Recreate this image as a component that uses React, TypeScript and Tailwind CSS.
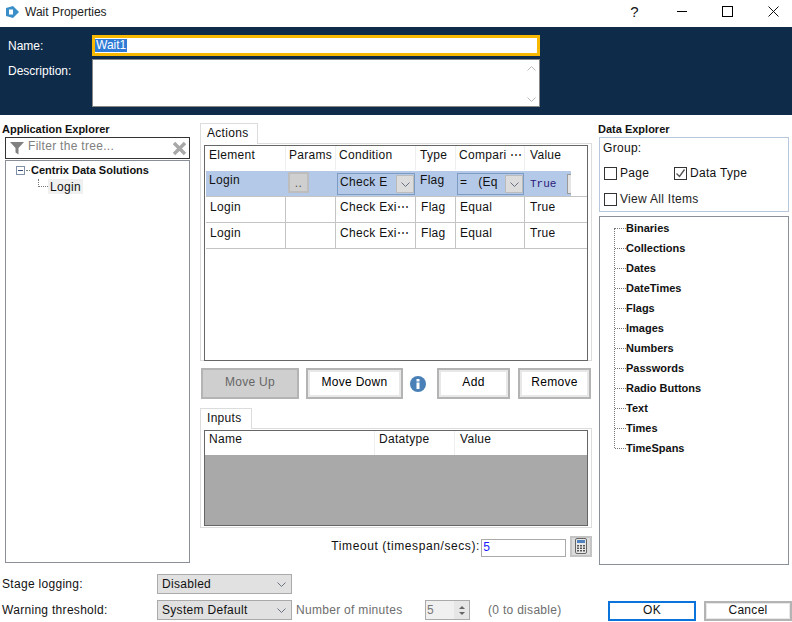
import { useState } from 'react';

const dataItems = [
  'Binaries',
  'Collections',
  'Dates',
  'DateTimes',
  'Flags',
  'Images',
  'Numbers',
  'Passwords',
  'Radio Buttons',
  'Text',
  'Times',
  'TimeSpans',
];

const columns = 'grid grid-cols-[80px_50px_80px_40px_69px_1fr]';

function Chevron({ className = 'text-gray-500' }: { className?: string }) {
  return (
    <svg width="9" height="5" viewBox="0 0 9 5" className={className}>
      <path d="M0.5 0.5 L4.5 4.5 L8.5 0.5" fill="none" stroke="currentColor" />
    </svg>
  );
}

function Calculator({ className = '' }: { className?: string }) {
  return (
    <svg width="12" height="16" viewBox="0 0 12 16" className={className}>
      <rect x="0.5" y="0.5" width="11" height="15" rx="1.5" fill="#e8e8e8" stroke="#666" />
      <rect x="2" y="2" width="8" height="3" fill="#4f81bd" />
      <path
        d="M2 7h2v1.5H2zM5 7h2v1.5H5zM8 7h2v1.5H8zM2 9.5h2V11H2zM5 9.5h2V11H5zM8 9.5h2V11H8zM2 12h2v1.5H2zM5 12h2v1.5H5zM8 12h2v1.5H8z"
        fill="#555"
      />
    </svg>
  );
}

function CellCombo({ label }: { label: string }) {
  return (
    <div className="flex h-[22px] w-full items-center justify-between border border-[#7d9cc4] bg-[#b4c9e8] pl-[2px]">
      <span className="whitespace-pre pb-[5px]">{label}</span>
      <span className="flex h-[18px] w-[18px] items-center justify-center border border-[#bbb] bg-[#dcdcdc]">
        <Chevron />
      </span>
    </div>
  );
}

function Row({ cond, comp }: { cond: string; comp: string }) {
  return (
    <div className={`${columns} h-[26px] border-b border-[#c4c4c4]`}>
      <div className="border-r border-[#c4c4c4] pl-[4px] pt-[3px]">Login</div>
      <div className="border-r border-[#c4c4c4]" />
      <div className="border-r border-[#c4c4c4] pl-[4px] pt-[3px]">{cond}</div>
      <div className="border-r border-[#c4c4c4] pl-[5px] pt-[3px]">Flag</div>
      <div className="border-r border-[#c4c4c4] pl-[4px] pt-[3px]">{comp}</div>
      <div className="pl-[5px] pt-[3px]">True</div>
    </div>
  );
}

function ActionButton({ label, className = '', disabled = false }: { label: string; className?: string; disabled?: boolean }) {
  return (
    <button
      type="button"
      className={`h-[31px] border-2 border-[#b4b4b4] pb-[3px] shadow-[inset_0_0_0_2px_#e8e8e8] ${
        disabled ? 'bg-[#cfcfcf] text-[#666] shadow-none' : 'bg-white text-black'
      } ${className}`}
    >
      {label}
    </button>
  );
}

function TabLabel({ label, className = '' }: { label: string; className?: string }) {
  return (
    <div className={`relative -mb-px h-[21px] border border-b-0 border-[#dcdcdc] bg-white pl-[6px] pt-[2px] ${className}`}>
      {label}
    </div>
  );
}

function CheckBox({ checked = false }: { checked?: boolean }) {
  return (
    <span className="flex h-[13px] w-[13px] items-center justify-center border border-[#333]">
      {checked && (
        <svg width="11" height="11" viewBox="0 0 11 11">
          <path d="M1.5 5.5 L4.5 8.5 L9.5 1.5" fill="none" stroke="#555" strokeWidth="1.4" />
        </svg>
      )}
    </span>
  );
}

export default function App() {
  const [name] = useState('Wait1');

  return (
    <div className="flex h-[622px] w-[792px] flex-col overflow-hidden bg-white font-['Liberation_Sans',sans-serif] text-[12px] leading-[14px] tracking-[0.3px] text-[#111]">
      {/* title bar */}
      <div className="flex h-[27px] items-center pb-[4px] pl-[6px]">
        <svg width="14" height="14" viewBox="0 0 14 14">
          <path d="M0 3 L7 1 L13 7 L7 13 L0 11 Z" fill="#3b8fc9" />
          <rect x="3" y="4.5" width="4" height="5" fill="#fff" />
        </svg>
        <span className="ml-[5px] tracking-normal text-[#222]">Wait Properties</span>
        <div className="ml-auto flex items-center pr-[13px]">
          <span className="mr-[38px] text-[15px]">?</span>
          <span className="mr-[35px] h-px w-[10px] bg-black" />
          <span className="mr-[35px] h-[11px] w-[11px] border border-black" />
          <svg width="11" height="11" viewBox="0 0 11 11">
            <path d="M0.5 0.5 L10.5 10.5 M10.5 0.5 L0.5 10.5" stroke="#111" fill="none" />
          </svg>
        </div>
      </div>

      {/* name and description */}
      <div className="h-[88px] bg-[#0e2b4a] pl-[8px] pt-[8px] tracking-normal text-white">
        <div className="flex h-[21px] items-center">
          <span className="w-[84px]">Name:</span>
          <div className="flex h-[21px] w-[448px] items-center border-[3px] border-[#f8b800] bg-white">
            <span className="h-[13px] bg-[#2f7bd6] px-px leading-[13px]">{name}</span>
          </div>
        </div>
        <div className="mt-[3px] flex">
          <span className="w-[84px] pt-[5px]">Description:</span>
          <div className="flex h-[48px] w-[448px] justify-end border border-[#888] bg-white pr-[3px] pt-[6px]">
            <div className="flex h-[36px] flex-col items-center justify-between text-[#bbb]">
              <Chevron className="rotate-180 text-[#bbb]" />
              <Chevron className="text-[#bbb]" />
            </div>
          </div>
        </div>
      </div>

      {/* three columns */}
      <div className="flex h-[458px]">
        <div className="flex w-[200px] flex-col pt-[7px]">
          <div className="pl-[2px] text-[11px] font-bold tracking-normal">Application Explorer</div>
          <div className="ml-[5px] mt-[1px] flex h-[22px] w-[185px] items-center border border-[#333] pl-[4px] pr-[2px]">
            <svg width="14" height="14" viewBox="0 0 14 14">
              <path d="M0 1 H14 L8.5 7 V13.5 L5.5 11.5 V7 Z" fill="#808080" />
            </svg>
            <span className="ml-[4px] pb-[4px] text-[#808080]">Filter the tree...</span>
            <svg width="15" height="15" viewBox="0 0 15 15" className="ml-auto">
              <path d="M2 2 L13 13 M13 2 L2 13" stroke="#a8a8a8" strokeWidth="3.5" />
            </svg>
          </div>
          <div className="ml-[5px] mt-[1px] h-[403px] w-[185px] border border-[#8a8f98] pl-[10px] pt-[1px]">
            <div className="flex h-[16px] items-center">
              <span className="flex h-[9px] w-[9px] items-center justify-center border border-[#7f8fa8]">
                <span className="h-px w-[5px] bg-[#36507c]" />
              </span>
              <span className="ml-[1px] w-[4px] border-t border-dotted border-[#777]" />
              <span className="ml-[1px] text-[11px] font-bold tracking-normal">Centrix Data Solutions</span>
            </div>
            <div className="flex h-[17px] items-center pl-[22px]">
              <span className="mb-[7px] h-[8px] w-[10px] border-b border-l border-dotted border-[#777]" />
              <span className="bg-[#f0f0f0] px-[2px] pt-px">Login</span>
            </div>
          </div>
        </div>

        <div className="flex w-[399px] flex-col pt-[8px]">
          <TabLabel label="Actions" className="w-[58px]" />
          <div className="h-[218px] w-[392px] border border-[#dcdcdc] px-[3px] pt-[1px]">
            <div className="h-[216px] w-[384px] border border-[#666] pl-px">
              <div className={`${columns} h-[25px] border-b border-white`}>
                <div className="border-r border-[#eee] pl-[3px] pt-[2px]">Element</div>
                <div className="border-r border-[#eee] pl-[3px] pt-[2px]">Params</div>
                <div className="border-r border-[#eee] pl-[3px] pt-[2px]">Condition</div>
                <div className="border-r border-[#eee] pl-[4px] pt-[2px]">Type</div>
                <div className="border-r border-[#eee] pl-[3px] pt-[2px]">Compari ⋯</div>
                <div className="pl-[5px] pt-[2px]">Value</div>
              </div>
              <div className={`${columns} h-[26px] border-b border-[#c4c4c4]`}>
                <div className="bg-[#b4c9e8] pl-[3px] pt-[2px]">Login</div>
                <div className="bg-[#b4c9e8] pl-[2px] pt-[1px]">
                  <div className="flex h-[21px] w-[21px] items-center justify-center border-2 border-[#bdbdbd] bg-[#cfcfcf] text-[#555]">..</div>
                </div>
                <div className="bg-[#b4c9e8] pl-px pt-[2px] pr-px">
                  <CellCombo label="Check E" />
                </div>
                <div className="bg-[#b4c9e8] pl-[4px] pt-[2px]">Flag</div>
                <div className="bg-[#b4c9e8] pl-px pt-[2px] pr-px">
                  <CellCombo label="=   (Eq" />
                </div>
                <div className="flex w-[46px] items-center bg-[#b4c9e8] pl-[5px]">
                  <span className="font-['Liberation_Mono',monospace] text-[11px] tracking-normal text-[#2a1a7a]">True</span>
                  <span className="ml-[11px] flex h-[20px] w-[4px] items-center overflow-hidden border border-r-0 border-[#999] bg-[#e4e4e4]" />
                </div>
              </div>
              <Row cond="Check Exi⋯" comp="Equal" />
              <Row cond="Check Exi⋯" comp="Equal" />
            </div>
          </div>

          <div className="mt-[7px] flex items-center">
            <ActionButton label="Move Up" disabled className="ml-px w-[98px]" />
            <ActionButton label="Move Down" className="ml-[7px] w-[97px]" />
            <svg width="16" height="16" viewBox="0 0 16 16" className="ml-[7px]">
              <circle cx="8" cy="8" r="8" fill="#4a80b8" />
              <rect x="6.5" y="6.5" width="3" height="6.5" fill="#fff" />
              <rect x="6.5" y="3" width="3" height="2.5" fill="#fff" />
            </svg>
            <ActionButton label="Add" className="ml-[11px] w-[73px]" />
            <ActionButton label="Remove" className="ml-[8px] w-[73px]" />
          </div>

          <div className="mt-[9px]">
            <TabLabel label="Inputs" className="w-[52px]" />
            <div className="h-[100px] w-[392px] border border-[#dcdcdc] px-[3px] pt-px">
              <div className="h-[96px] w-[384px] border border-[#666]">
                <div className="grid h-[24px] grid-cols-[170px_80px_1fr] bg-white">
                  <div className="border-r border-[#eee] pl-[4px] pt-[1px]">Name</div>
                  <div className="border-r border-[#eee] pl-[4px] pt-[1px]">Datatype</div>
                  <div className="pl-[5px] pt-[1px]">Value</div>
                </div>
                <div className="h-[70px] bg-[#a9a9a9]" />
              </div>
            </div>
          </div>

          <div className="mt-[7px] flex h-[22px] items-center justify-end pr-[7px]">
            <span className="tracking-[0.6px]">Timeout (timespan/secs):</span>
            <div className="ml-px mt-[4px] flex h-[18px] w-[85px] items-center border border-[#aaa] pl-px font-['Liberation_Mono',monospace] text-[#1a1aff]">5</div>
            <span className="ml-[4px] flex h-[21px] w-[22px] items-center justify-center border-2 border-[#c4c4c4] bg-[#dcdcdc]">
              <Calculator />
            </span>
          </div>
        </div>

        <div className="flex w-[193px] flex-col pt-[7px]">
          <div className="-ml-px text-[11px] font-bold tracking-normal">Data Explorer</div>
          <div className="mt-px h-[75px] w-[190px] border border-[#b8c8dc] pl-[3px] pt-[3px]">
            <div>Group:</div>
            <div className="mt-[11px] flex items-center pl-px">
              <CheckBox />
              <span className="ml-[3px] w-[54px]">Page</span>
              <CheckBox checked />
              <span className="ml-[3px]">Data Type</span>
            </div>
            <div className="mt-[12px] flex items-center pl-px">
              <CheckBox />
              <span className="ml-[3px] text-[#222]">View All Items</span>
            </div>
          </div>
          <div className="mt-[4px] h-[349px] w-[190px] border border-[#8a8f98] pl-[14px] pt-px">
            <div className="relative">
              <span className="absolute bottom-[10px] left-0 top-[10px] border-l border-dotted border-[#777]" />
              {dataItems.map((item) => (
                <div key={item} className="flex h-[20px] items-center">
                  <span className="ml-px w-[11px] border-t border-dotted border-[#777]" />
                  <span className="text-[11px] font-bold tracking-normal">{item}</span>
                </div>
              ))}
            </div>
          </div>
        </div>
      </div>

      {/* bottom settings */}
      <div className="flex h-[49px] flex-col pl-[2px] pt-[1px]">
        <div className="flex h-[20px] items-center">
          <span className="w-[155px]">Stage logging:</span>
          <div className="flex h-[20px] w-[135px] items-center justify-between border border-[#aaa] bg-[#e1e1e1] pl-[4px] pr-[5px]">
            <span>Disabled</span>
            <Chevron />
          </div>
        </div>
        <div className="mt-[6px] flex h-[20px] items-center">
          <span className="w-[155px]">Warning threshold:</span>
          <div className="flex h-[20px] w-[135px] items-center justify-between border border-[#aaa] bg-[#e1e1e1] pl-[4px] pr-[5px]">
            <span>System Default</span>
            <Chevron />
          </div>
          <span className="ml-[4px] w-[129px] text-[#6d6d6d]">Number of minutes</span>
          <div className="flex h-[20px] w-[45px] items-center justify-between border border-[#aaa] bg-[#f0f0f0] pl-px text-[#777]">
            <span>5</span>
            <span className="flex h-full w-[15px] flex-col items-center justify-center gap-[3px] bg-[#e6e6e6]">
              <span className="h-0 w-0 border-x-[3px] border-b-[3px] border-x-transparent border-b-[#666]" />
              <span className="h-0 w-0 border-x-[3px] border-t-[3px] border-x-transparent border-t-[#666]" />
            </span>
          </div>
          <span className="ml-[18px] w-[120px] text-[#6d6d6d]">(0 to disable)</span>
          <button type="button" className="mt-[2px] h-[20px] w-[88px] border-2 border-[#0a74da] bg-white pb-[2px]">OK</button>
          <button type="button" className="ml-[8px] mt-[2px] h-[20px] w-[88px] border-2 border-[#b4b4b4] bg-white pb-[2px] shadow-[inset_0_0_0_1px_#e8e8e8]">Cancel</button>
        </div>
      </div>
    </div>
  );
}
